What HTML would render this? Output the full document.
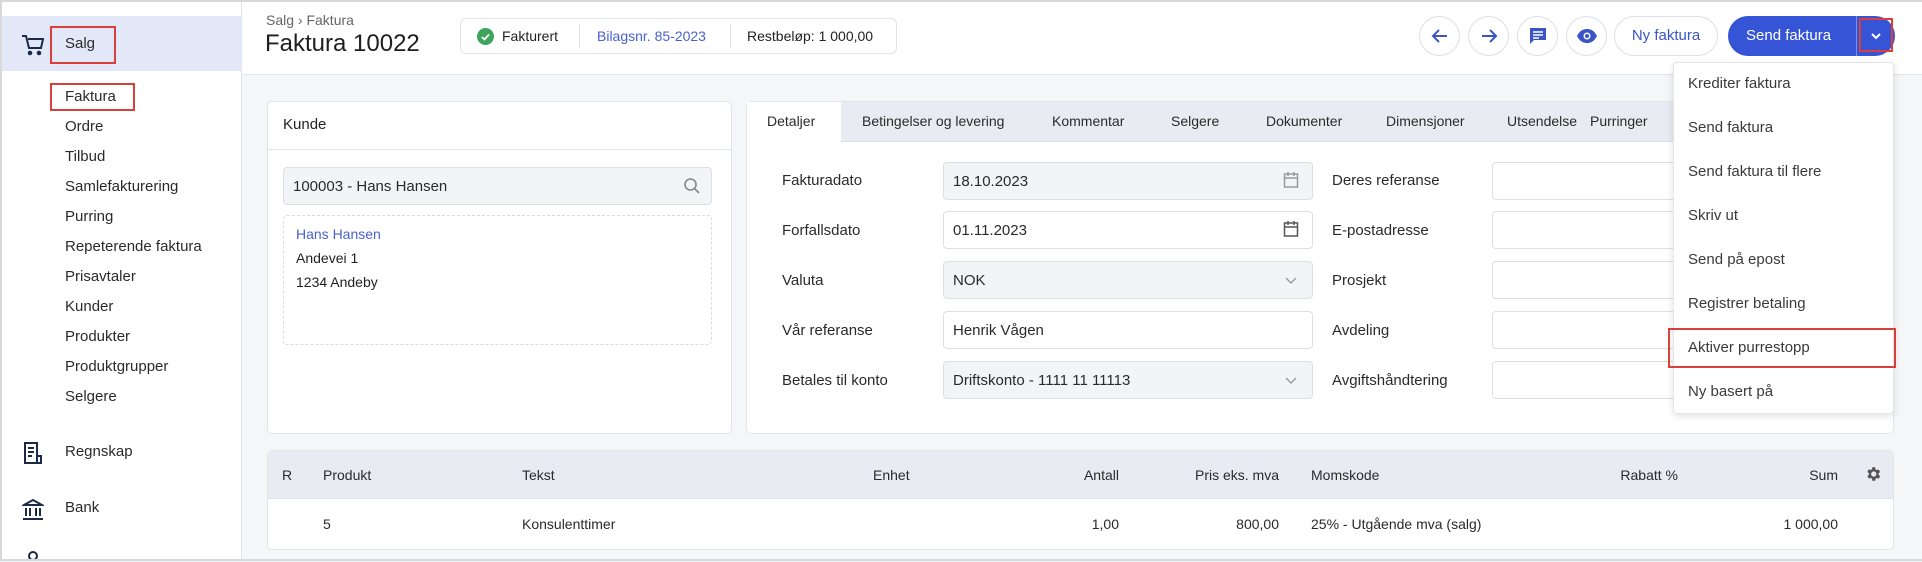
<!DOCTYPE html>
<html><head><meta charset="utf-8"><style>
*{box-sizing:border-box;margin:0;padding:0}
body{width:1922px;height:561px;overflow:hidden;background:#f5f6f8;font-family:"Liberation Sans",sans-serif;color:#222;font-size:15px;position:relative}
.a{position:absolute}
.frame{position:absolute;left:0;top:0;width:1922px;height:561px;border:2px solid #d8d8d8;border-right:none;pointer-events:none}
.side{left:0;top:0;width:242px;height:561px;background:#fff;border-right:1px solid #e1e3e8}
.si{position:absolute;left:65px;font-size:15px;color:#2a2a2a;line-height:18px}
.hdr{left:242px;top:0;width:1680px;height:75px;background:#fff;border-bottom:1px solid #e1e3e8}
.card{background:#fff;border:1px solid #e1e3e8;border-radius:5px}
.circ{position:absolute;top:16px;width:41px;height:40px;border:1px solid #dcdfe6;border-radius:50%;background:#fff}
.lbl{position:absolute;left:782px;font-size:15px;color:#2a2a2a}
.lbl2{position:absolute;left:1332px;font-size:15px;color:#2a2a2a}
.inp{position:absolute;height:38px;border:1px solid #dcdfe6;border-radius:4px;background:#f3f4f6;font-size:15px;padding:10px 9px;color:#2a2a2a}
.tab{position:absolute;top:113px;font-size:14px;color:#2a2a2a}
.mi{position:absolute;left:1688px;font-size:15px;color:#3a3a3a}
.th{position:absolute;top:467px;font-size:14px;color:#2a2a2a}
.td{position:absolute;top:516px;font-size:14px;color:#2a2a2a}
.red{position:absolute;border:2px solid #d9403b}
</style></head><body>
<div class="a side"></div>
<div class="a" style="left:0;top:16px;width:242px;height:55px;background:#e3e8f8"></div>
<svg class="a" style="left:21px;top:33px" width="24" height="24" viewBox="0 0 24 24" fill="none" stroke="#1c2a4a" stroke-width="2"><path d="M1 3h4l3 12h12l2-9H7"/><circle cx="9" cy="20" r="1.3" fill="#1c2a4a"/><circle cx="18" cy="20" r="1.3" fill="#1c2a4a"/></svg>
<div class="si" style="top:35px">Salg</div>
<div class="red" style="left:50px;top:26px;width:66px;height:38px"></div>
<div class="si" style="top:88px">Faktura</div>
<div class="red" style="left:50px;top:83px;width:85px;height:28px"></div>
<div class="si" style="top:118px">Ordre</div>
<div class="si" style="top:148px">Tilbud</div>
<div class="si" style="top:178px">Samlefakturering</div>
<div class="si" style="top:208px">Purring</div>
<div class="si" style="top:238px">Repeterende faktura</div>
<div class="si" style="top:268px">Prisavtaler</div>
<div class="si" style="top:298px">Kunder</div>
<div class="si" style="top:328px">Produkter</div>
<div class="si" style="top:358px">Produktgrupper</div>
<div class="si" style="top:388px">Selgere</div>
<svg class="a" style="left:23px;top:442px" width="20" height="22" viewBox="0 0 20 22" fill="none" stroke="#1c2a4a" stroke-width="2"><path d="M2 1h12v20H2z M14 14h4v7h-4"/><path d="M5 6h6M5 10h6M5 14h4"/></svg>
<div class="si" style="top:443px">Regnskap</div>
<svg class="a" style="left:22px;top:498px" width="22" height="22" viewBox="0 0 22 22" fill="none" stroke="#1c2a4a" stroke-width="2"><path d="M2 7L11 2l9 5H2z M4 10v8M8 10v8M14 10v8M18 10v8M1 21h20"/></svg>
<div class="si" style="top:499px">Bank</div>
<svg class="a" style="left:27px;top:550px" width="12" height="12"><circle cx="6" cy="6" r="4" fill="none" stroke="#1c2a4a" stroke-width="2"/></svg>

<div class="a hdr"></div>
<div class="a" style="left:266px;top:12px;font-size:14px;color:#666">Salg › Faktura</div>
<div class="a" style="left:265px;top:30px;font-size:24px;color:#1e1e1e">Faktura 10022</div>
<div class="a card" style="left:460px;top:18px;width:437px;height:36px;border-radius:6px"></div>
<svg class="a" style="left:477px;top:28px" width="17" height="17"><circle cx="8.5" cy="8.5" r="8.5" fill="#3fa45b"/><path d="M5 9l2.5 2.5L12 6.5" stroke="#fff" stroke-width="1.8" fill="none"/></svg>
<div class="a" style="left:502px;top:28px;font-size:14px">Fakturert</div>
<div class="a" style="left:579px;top:24px;width:1px;height:24px;background:#e1e3e8"></div>
<div class="a" style="left:597px;top:28px;font-size:14px;color:#4a62d0">Bilagsnr. 85-2023</div>
<div class="a" style="left:730px;top:24px;width:1px;height:24px;background:#e1e3e8"></div>
<div class="a" style="left:747px;top:28px;font-size:14px">Restbeløp: 1 000,00</div>

<div class="circ" style="left:1419px"></div>
<svg class="a" style="left:1430px;top:26px" width="20" height="20" viewBox="0 0 20 20" fill="none" stroke="#3b55c9" stroke-width="2"><path d="M17 10H3M9 4L3 10l6 6"/></svg>
<div class="circ" style="left:1468px"></div>
<svg class="a" style="left:1479px;top:26px" width="20" height="20" viewBox="0 0 20 20" fill="none" stroke="#3b55c9" stroke-width="2"><path d="M3 10h14M11 4l6 6-6 6"/></svg>
<div class="circ" style="left:1517px"></div>
<svg class="a" style="left:1528px;top:26px" width="20" height="20" viewBox="0 0 20 20"><path d="M2 2h16v12H6l-4 4z" fill="#3b55c9"/><path d="M5 6h10M5 9h10M5 12h6" stroke="#fff" stroke-width="1.5"/></svg>
<div class="circ" style="left:1566px"></div>
<svg class="a" style="left:1576px;top:26px" width="22" height="20" viewBox="0 0 22 20"><path d="M1 10C4 4 8 3 11 3s7 1 10 7c-3 6-7 7-10 7S4 16 1 10z" fill="#3b55c9"/><circle cx="11" cy="10" r="3.5" fill="#fff"/><circle cx="11" cy="10" r="2" fill="#3b55c9"/></svg>
<div class="a" style="left:1614px;top:16px;width:104px;height:40px;border:1px solid #dcdfe6;border-radius:20px;background:#fff;font-size:15px;color:#3b55c9;text-align:center;line-height:38px">Ny faktura</div>
<div class="a" style="left:1728px;top:16px;width:167px;height:40px;border-radius:20px;background:#3554d6"></div>
<div class="a" style="left:1746px;top:27px;font-size:15px;color:#fff">Send faktura</div>
<div class="a" style="left:1856px;top:16px;width:1px;height:40px;background:#7d90e4"></div>
<svg class="a" style="left:1869px;top:30px" width="14" height="12" viewBox="0 0 14 12" fill="none" stroke="#fff" stroke-width="2"><path d="M3 4l4 4 4-4"/></svg>
<div class="red" style="left:1859px;top:18px;width:34px;height:34px"></div>

<div class="a card" style="left:267px;top:101px;width:465px;height:333px"></div>
<div class="a" style="left:283px;top:116px;font-size:15px">Kunde</div>
<div class="a" style="left:267px;top:149px;width:465px;height:1px;background:#e1e3e8"></div>
<div class="inp" style="left:283px;top:167px;width:429px">100003 - Hans Hansen</div>
<svg class="a" style="left:683px;top:177px" width="18" height="18" viewBox="0 0 18 18" fill="none" stroke="#888" stroke-width="1.6"><circle cx="7.5" cy="7.5" r="5.5"/><path d="M11.5 11.5L16 16"/></svg>
<div class="a" style="left:283px;top:215px;width:429px;height:130px;border:1px dashed #d8dbe2;border-radius:4px"></div>
<div class="a" style="left:296px;top:226px;font-size:14px;color:#4a62d0">Hans Hansen</div>
<div class="a" style="left:296px;top:250px;font-size:14px">Andevei 1</div>
<div class="a" style="left:296px;top:274px;font-size:14px">1234 Andeby</div>

<div class="a card" style="left:746px;top:101px;width:1148px;height:333px"></div>
<div class="a" style="left:747px;top:102px;width:1146px;height:40px;background:#e8ebf2;border-bottom:1px solid #dde0e8"></div>
<div class="a" style="left:747px;top:102px;width:94px;height:41px;background:#fff"></div>
<div class="tab" style="left:767px">Detaljer</div>
<div class="tab" style="left:862px">Betingelser og levering</div>
<div class="tab" style="left:1052px">Kommentar</div>
<div class="tab" style="left:1171px">Selgere</div>
<div class="tab" style="left:1266px">Dokumenter</div>
<div class="tab" style="left:1386px">Dimensjoner</div>
<div class="tab" style="left:1507px">Utsendelse</div>
<div class="tab" style="left:1590px">Purringer</div>

<div class="lbl" style="top:172px">Fakturadato</div>
<div class="inp" style="left:943px;top:162px;width:370px">18.10.2023</div>
<div class="lbl" style="top:222px">Forfallsdato</div>
<div class="inp" style="left:943px;top:211px;width:370px;background:#fff">01.11.2023</div>
<div class="lbl" style="top:272px">Valuta</div>
<div class="inp" style="left:943px;top:261px;width:370px">NOK</div>
<div class="lbl" style="top:322px">Vår referanse</div>
<div class="inp" style="left:943px;top:311px;width:370px;background:#fff">Henrik Vågen</div>
<div class="lbl" style="top:372px">Betales til konto</div>
<div class="inp" style="left:943px;top:361px;width:370px">Driftskonto - 1111 11 11113</div>
<svg class="a" style="left:1283px;top:171px" width="16" height="18" viewBox="0 0 16 18" fill="none" stroke="#999" stroke-width="1.5"><rect x="1.5" y="3" width="13" height="13"/><path d="M1.5 7h13M5 1v4M11 1v4"/></svg>
<svg class="a" style="left:1283px;top:220px" width="16" height="18" viewBox="0 0 16 18" fill="none" stroke="#555" stroke-width="1.5"><rect x="1.5" y="3" width="13" height="13"/><path d="M1.5 7h13M5 1v4M11 1v4"/></svg>
<svg class="a" style="left:1285px;top:277px" width="12" height="8" fill="none" stroke="#999" stroke-width="1.4"><path d="M1 1l5 5 5-5"/></svg>
<svg class="a" style="left:1285px;top:377px" width="12" height="8" fill="none" stroke="#999" stroke-width="1.4"><path d="M1 1l5 5 5-5"/></svg>

<div class="lbl2" style="top:172px">Deres referanse</div>
<div class="inp" style="left:1492px;top:162px;width:300px;background:#fff"></div>
<div class="lbl2" style="top:222px">E-postadresse</div>
<div class="inp" style="left:1492px;top:211px;width:300px;background:#fff"></div>
<div class="lbl2" style="top:272px">Prosjekt</div>
<div class="inp" style="left:1492px;top:261px;width:300px;background:#fff"></div>
<div class="lbl2" style="top:322px">Avdeling</div>
<div class="inp" style="left:1492px;top:311px;width:300px;background:#fff"></div>
<div class="lbl2" style="top:372px">Avgiftshåndtering</div>
<div class="inp" style="left:1492px;top:361px;width:300px;background:#fff"></div>

<div class="a" style="left:1673px;top:62px;width:221px;height:352px;background:#fff;border:1px solid #e4e6ea;border-radius:4px;box-shadow:0 2px 8px rgba(0,0,0,.12)"></div>
<div class="mi" style="top:75px">Krediter faktura</div>
<div class="mi" style="top:119px">Send faktura</div>
<div class="mi" style="top:163px">Send faktura til flere</div>
<div class="mi" style="top:207px">Skriv ut</div>
<div class="mi" style="top:251px">Send på epost</div>
<div class="mi" style="top:295px">Registrer betaling</div>
<div class="mi" style="top:339px">Aktiver purrestopp</div>
<div class="mi" style="top:383px">Ny basert på</div>
<div class="red" style="left:1668px;top:328px;width:228px;height:40px"></div>

<div class="a card" style="left:267px;top:450px;width:1627px;height:100px"></div>
<div class="a" style="left:268px;top:451px;width:1625px;height:48px;background:#e8ebf2;border-bottom:1px solid #dde0e8;border-radius:5px 5px 0 0"></div>
<div class="th" style="left:282px">R</div>
<div class="th" style="left:323px">Produkt</div>
<div class="th" style="left:522px">Tekst</div>
<div class="th" style="left:873px">Enhet</div>
<div class="th" style="left:1019px;width:100px;text-align:right">Antall</div>
<div class="th" style="left:1159px;width:120px;text-align:right">Pris eks. mva</div>
<div class="th" style="left:1311px">Momskode</div>
<div class="th" style="left:1578px;width:100px;text-align:right">Rabatt %</div>
<div class="th" style="left:1738px;width:100px;text-align:right">Sum</div>
<svg class="a" style="left:1864px;top:465px" width="18" height="18" viewBox="0 0 24 24"><path fill="#555" d="M19.4 13a7.5 7.5 0 000-2l2.1-1.6-2-3.5-2.5 1a7.6 7.6 0 00-1.7-1L15 3h-4l-.4 2.7a7.6 7.6 0 00-1.7 1l-2.5-1-2 3.5L6.6 11a7.5 7.5 0 000 2l-2.1 1.6 2 3.5 2.5-1a7.6 7.6 0 001.7 1L11 21h4l.4-2.7a7.6 7.6 0 001.7-1l2.5 1 2-3.5zM13 15.5a3.5 3.5 0 110-7 3.5 3.5 0 010 7z"/></svg>
<div class="td" style="left:323px">5</div>
<div class="td" style="left:522px">Konsulenttimer</div>
<div class="td" style="left:1019px;width:100px;text-align:right">1,00</div>
<div class="td" style="left:1159px;width:120px;text-align:right">800,00</div>
<div class="td" style="left:1311px">25% - Utgående mva (salg)</div>
<div class="td" style="left:1738px;width:100px;text-align:right">1 000,00</div>

<div class="frame"></div>
</body></html>
